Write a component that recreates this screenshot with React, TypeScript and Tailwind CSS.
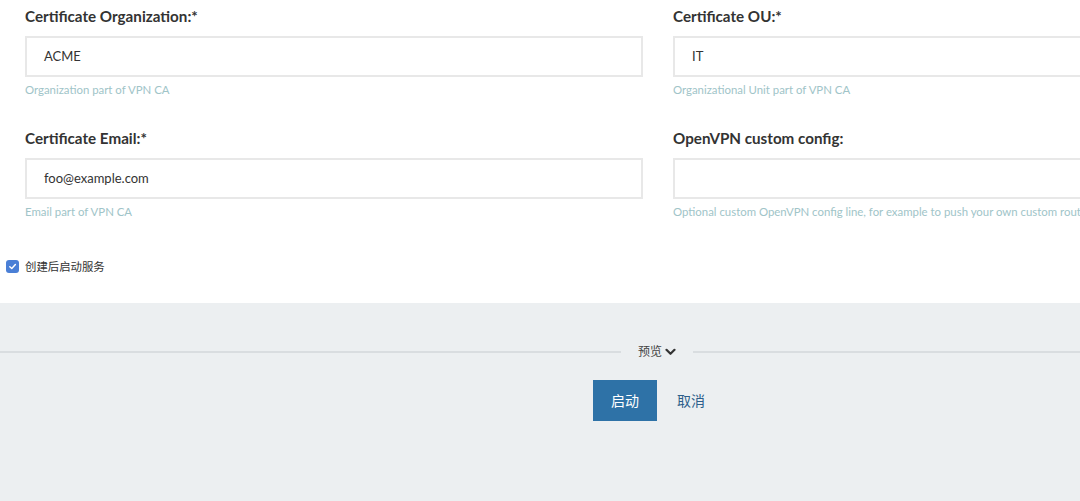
import React from 'react';

interface Field {
    label: string;
    value: string;
    help: string;
}

const fields: Field[] = [
    { label: 'Certificate Organization:*', value: 'ACME', help: 'Organization part of VPN CA' },
    { label: 'Certificate OU:*', value: 'IT', help: 'Organizational Unit part of VPN CA' },
    { label: 'Certificate Email:*', value: 'foo@example.com', help: 'Email part of VPN CA' },
    {
        label: 'OpenVPN custom config:',
        value: '',
        help: 'Optional custom OpenVPN config line, for example to push your own custom routes',
    },
];

const FormField: React.FC<{ field: Field }> = ({ field }) => (
    <div className="flex flex-col">
        <label className="text-[15.2px] font-bold leading-[20px] text-[#333]">{field.label}</label>
        <div className="mt-[10px] flex h-[41px] items-center border-2 border-[#e8e8e8] bg-white px-[17px] text-[13px] text-[#333]">
            {field.value}
        </div>
        <p className="mt-[5px] whitespace-nowrap text-[11.4px] leading-[16px] text-[#a0c4c8]">{field.help}</p>
    </div>
);

const App: React.FC = () => {
    return (
        <div className="h-[501px] w-[1080px] overflow-hidden bg-white font-['Lato','Noto_Sans_CJK_SC',sans-serif]">
            <div className="flex h-full w-[1314px] flex-col">
                {/* form */}
                <div className="h-[303px] bg-white">
                    <div className="grid grid-cols-2 gap-x-[30px] gap-y-[30px] pl-[25px] pr-[23px] pt-[6px]">
                        {fields.map((f) => (
                            <FormField key={f.label} field={f} />
                        ))}
                    </div>
                    <div className="mt-[38px] flex items-center pl-[6px]">
                        <span className="flex h-[13px] w-[13px] items-center justify-center rounded-[3px] bg-[#4a7fd6]">
                            <svg width="9" height="9" viewBox="0 0 10 10" fill="none">
                                <path d="M2 5.2 L4.2 7.3 L8.2 2.7" stroke="white" strokeWidth="1.6" strokeLinecap="round" strokeLinejoin="round" />
                            </svg>
                        </span>
                        <span className="ml-[6px] text-[11.4px] text-[#333]">创建后启动服务</span>
                    </div>
                </div>

                {/* footer */}
                <div className="flex-1 bg-[#eceff1] pt-[39px]">
                    <div className="flex h-[20px] items-center">
                        <div className="h-[2px] flex-1 bg-[#d9dde0]" />
                        <div className="flex items-center px-[17px] text-[12px] text-[#444]">
                            预览
                            <svg className="ml-[3px]" width="11" height="8" viewBox="0 0 11 8" fill="none">
                                <path d="M1.5 1.8 L5.5 5.8 L9.5 1.8" stroke="#333" strokeWidth="2.2" strokeLinecap="round" strokeLinejoin="round" />
                            </svg>
                        </div>
                        <div className="h-[2px] flex-1 bg-[#d9dde0]" />
                    </div>
                    <div className="mt-[18px] flex justify-center gap-[8px] pr-[4px]">
                        <button className="h-[41px] w-[64px] bg-[#2e72a7] text-[14px] text-white">启动</button>
                        <button className="h-[41px] px-[12px] text-[14px] text-[#2d5f8b]">取消</button>
                    </div>
                </div>
            </div>
        </div>
    );
};

export default App;
